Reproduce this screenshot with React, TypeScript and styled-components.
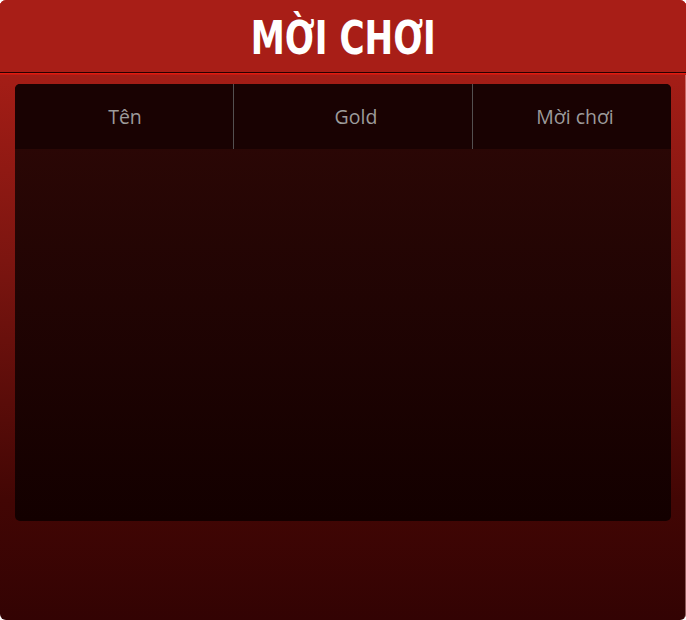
import React from 'react';
import styled, { createGlobalStyle } from 'styled-components';

const GlobalStyle = createGlobalStyle`
  html, body {
    margin: 0;
    padding: 0;
    background: #ffffff;
  }
`;

const Panel = styled.div`
  box-sizing: border-box;
  width: 686px;
  height: 620px;
  border-radius: 6px;
  overflow: hidden;
  display: flex;
  flex-direction: column;
  background: linear-gradient(to bottom, #a81e17 0px, #a31d16 80px, #7c1510 260px, #420604 500px, #330303 620px);
  box-shadow: inset -1px 1px 0 rgba(255, 200, 200, 0.45);
`;

const TitleBar = styled.div`
  height: 72px;
  flex: 0 0 72px;
  display: flex;
  align-items: center;
  justify-content: center;
  background: #a81e17;
  border-bottom: 1px solid #2a0000;
  box-shadow: 0 1px 0 #e01c10, 0 2px 0 #c41a12;
`;

const Title = styled.h1`
  margin: 2px 0 0 0;
  font-family: "DejaVu Sans Condensed", "DejaVu Sans", sans-serif;
  font-weight: bold;
  font-size: 47px;
  color: #ffffff;
  transform: scaleX(0.81);
`;

const Content = styled.div`
  padding: 11px 15px 0 15px;
`;

const Table = styled.div`
  height: 437px;
  border-radius: 5px;
  overflow: hidden;
  display: flex;
  flex-direction: column;
  background: linear-gradient(to bottom, #2e0806, #130000);
`;

const HeaderRow = styled.div`
  display: grid;
  grid-template-columns: 218px 1px 238px 1px 1fr;
  height: 65px;
  background: #190202;
`;

const HeaderCell = styled.div<{ $shift?: number }>`
  display: flex;
  align-items: center;
  justify-content: center;
  padding-left: ${(p) => p.$shift ?? 0}px;
  font-family: "Open Sans", "Noto Sans", sans-serif;
  font-size: 19.5px;
  color: #9d9b9b;
`;

const Divider = styled.div`
  background: #545050;
`;

export default function App() {
  return (
    <>
      <GlobalStyle />
      <Panel>
        <TitleBar>
          <Title>MỜI CHƠI</Title>
        </TitleBar>
        <Content>
          <Table>
            <HeaderRow>
              <HeaderCell $shift={2}>Tên</HeaderCell>
              <Divider />
              <HeaderCell $shift={6}>Gold</HeaderCell>
              <Divider />
              <HeaderCell $shift={6}>Mời chơi</HeaderCell>
            </HeaderRow>
          </Table>
        </Content>
      </Panel>
    </>
  );
}
